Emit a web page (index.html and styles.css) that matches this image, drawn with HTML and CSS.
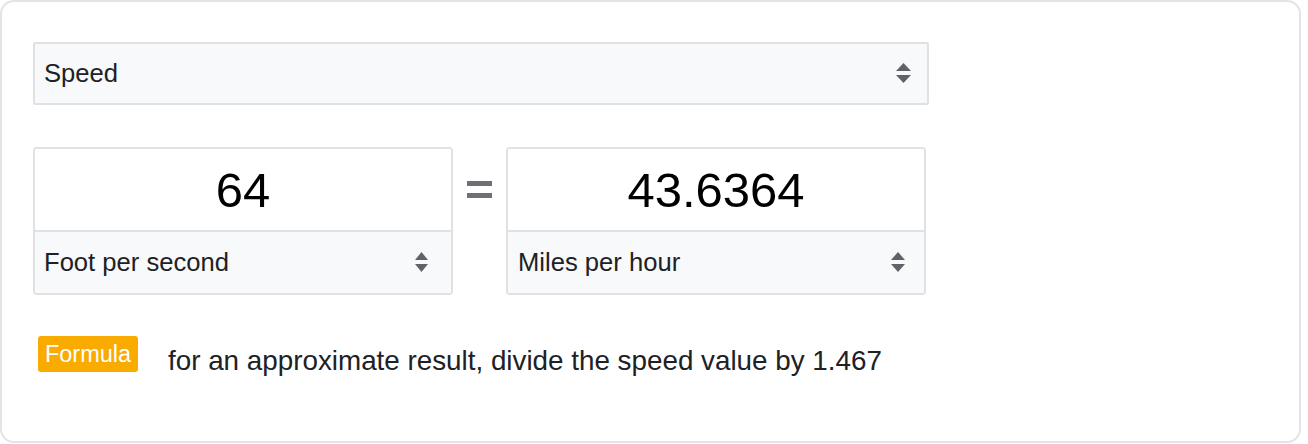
FILE: index.html
```html
<!DOCTYPE html>
<html lang="en">
<head>
<meta charset="utf-8">
<title>Speed converter</title>
<link rel="stylesheet" href="styles.css">
</head>
<body>
<div class="card">
  <div class="select type-select">
    <span class="select-label">Speed</span>
    <svg class="arrows" width="15" height="21" viewBox="0 0 15 21"><polygon points="7.5,0 15,8 0,8"/><polygon points="0,12 15,12 7.5,20"/></svg>
  </div>
  <div class="row">
    <div class="box">
      <div class="value">64</div>
      <div class="select unit-select">
        <span class="select-label">Foot per second</span>
        <svg class="arrows small" width="13" height="21" viewBox="0 0 13 21"><polygon points="6.5,0 13,8 0,8"/><polygon points="0,12 13,12 6.5,20"/></svg>
      </div>
    </div>
    <div class="equals"><span class="bar"></span><span class="bar"></span></div>
    <div class="box">
      <div class="value">43.6364</div>
      <div class="select unit-select right">
        <span class="select-label">Miles per hour</span>
        <svg class="arrows small" width="14" height="21" viewBox="0 0 14 21"><polygon points="7,0 14,8 0,8"/><polygon points="0,12 14,12 7,20"/></svg>
      </div>
    </div>
  </div>
  <div class="formula">
    <span class="badge">Formula</span>
    <span class="formula-text">for an approximate result, divide the speed value by 1.467</span>
  </div>
</div>
</body>
</html>
```

FILE: styles.css
```css
* { box-sizing: border-box; }
html, body { margin: 0; padding: 0; background: #fff; }
body { font-family: "Liberation Sans", Arial, sans-serif; color: #202124; }

.card {
  width: 1301px;
  height: 443px;
  border: 2px solid #e3e4e7;
  border-radius: 14px;
  padding: 40px 0 0 31px;
}

.select {
  display: flex;
  align-items: center;
  justify-content: space-between;
  background: #f8f9fa;
}
.select-label { font-size: 25.6px; color: #202124; }
.arrows { fill: #5f6368; flex: none; }

.type-select {
  width: 896px;
  height: 63px;
  border: 2px solid #dfe1e5;
  border-radius: 2px;
  padding: 0 16px 0 9px;
}

.row {
  display: flex;
  align-items: flex-start;
  margin-top: 42px;
}

.box {
  width: 420px;
  height: 148px;
  border: 2px solid #dfe1e5;
  border-radius: 4px;
  display: flex;
  flex-direction: column;
  overflow: hidden;
}
.value {
  height: 83px;
  display: flex;
  align-items: center;
  justify-content: center;
  font-size: 49px;
  color: #000;
  background: #fff;
  border-bottom: 2px solid #dfe1e5;
}
.unit-select {
  flex: 1;
  padding: 0 23px 0 9px;
}
.unit-select.right { padding: 0 19px 0 10px; }

.equals {
  width: 53px;
  display: flex;
  flex-direction: column;
  align-items: center;
  gap: 7px;
  padding-top: 34px;
}
.bar {
  display: block;
  width: 25px;
  height: 5px;
  background: #6d7075;
}

.formula {
  display: flex;
  align-items: flex-start;
  margin-top: 41px;
  padding-left: 5px;
}
.badge {
  display: inline-flex;
  align-items: center;
  justify-content: center;
  width: 100px;
  height: 36px;
  background: #f9ab00;
  color: #fff;
  border-radius: 3px;
  font-size: 23.5px;
  padding-top: 1px;
}
.formula-text {
  margin-left: 30px;
  font-size: 27.8px;
  line-height: 32px;
  color: #202124;
  padding-top: 9px;
}
```
